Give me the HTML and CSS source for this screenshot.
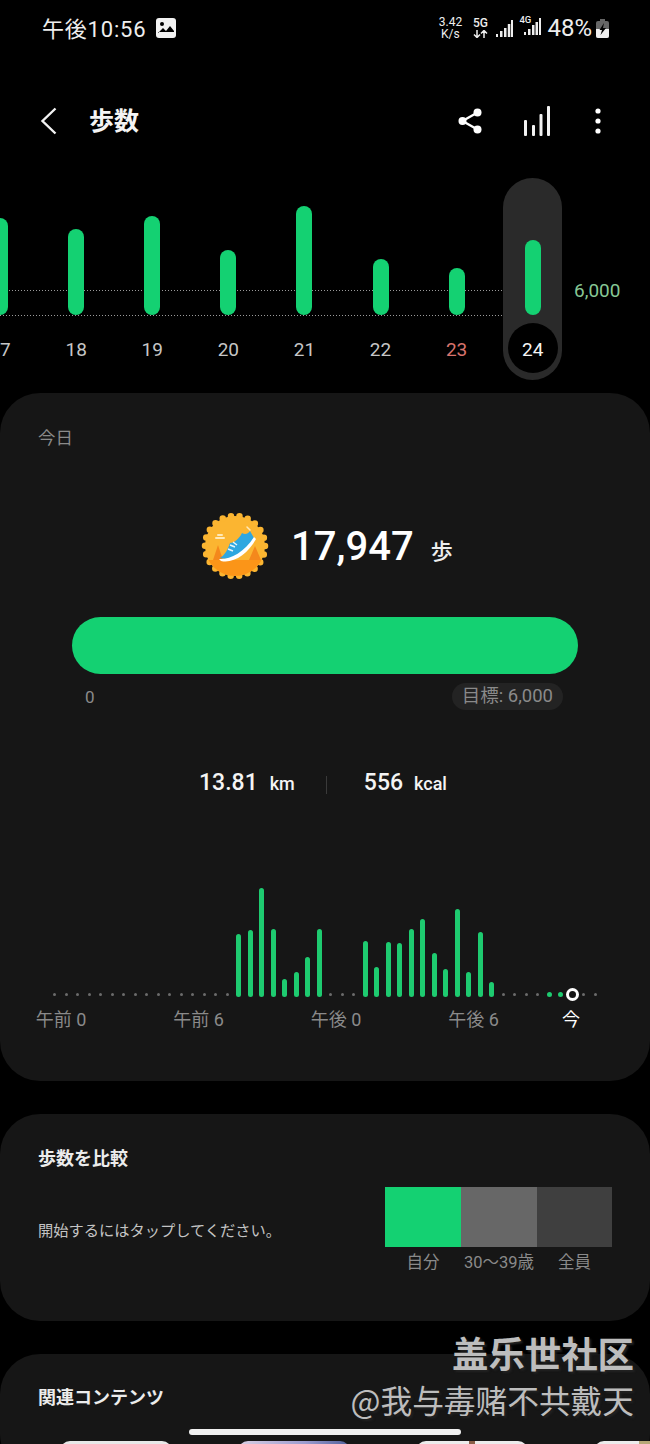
FILE: index.html
```html
<!DOCTYPE html>
<html lang="ja">
<head>
    <meta charset="UTF-8">
    <meta name="viewport" content="width=device-width, initial-scale=1.0">
    <title>歩数</title>
    <link rel="stylesheet" href="styles.css">
</head>
<body>
    <div class="status-bar">
        <div class="status-left">
            <span class="clock">午後10:56</span>
            <svg class="gallery-icon" width="20" height="20" viewBox="0 0 20 20">
                <rect width="20" height="20" rx="3" fill="#f2f2f2"/>
                <circle cx="6" cy="6" r="2" fill="#000"/>
                <path d="M2 15l5-5 3 3 4-5 4 5v1H2z" fill="#000"/>
            </svg>
        </div>
        <div class="status-right">
            <div class="net-speed"><span>3.42</span><span>K/s</span></div>
            <span class="net-type">
                <span>5G</span>
                <svg width="15" height="8" viewBox="0 0 15 8"><path d="M4 0v7M1 4.5L4 7.5 7 4.5M11 8V1M8 3.5L11 .5 14 3.5" fill="none" stroke="#eee" stroke-width="1.5"/></svg>
            </span>
            <svg class="signal" width="17" height="17" viewBox="0 0 17 17" fill="#eee">
                <rect x="0" y="14" width="2" height="3"/><rect x="4" y="11" width="2.5" height="6"/><rect x="8" y="8" width="2.5" height="9"/><rect x="11.8" y="4" width="2.5" height="13"/><rect x="15" y="0" width="2" height="17"/>
            </svg>
            <div class="signal-4g">
                <span>4G</span>
                <svg width="22" height="17" viewBox="0 0 22 17" fill="#eee">
                    <rect x="5" y="14" width="2" height="3"/><rect x="9" y="11" width="2.5" height="6"/><rect x="13" y="7" width="2.5" height="10"/><rect x="16.5" y="4" width="2.5" height="13"/><rect x="20" y="0" width="2" height="17"/>
                </svg>
            </div>
            <span class="battery-text">48%</span>
            <svg width="13" height="19" viewBox="0 0 13 19">
                <rect x="4" y="0" width="5" height="2" fill="#666"/>
                <rect x="0" y="2" width="13" height="17" rx="2" fill="#666"/>
                <path d="M0 10h13v7a2 2 0 0 1-2 2H2a2 2 0 0 1-2-2z" fill="#f0f0f0"/>
                <path d="M8 4L3.5 11H6L4.5 16 10 9H7z" fill="#000"/>
            </svg>
        </div>
    </div>

    <div class="app-bar">
        <svg class="back-icon" width="17" height="28" viewBox="0 0 17 28"><path d="M15.5 1.5L2.5 14l13 12.5" fill="none" stroke="#f2f2f2" stroke-width="2.4"/></svg>
        <h1 class="page-title">歩数</h1>
        <div class="app-actions">
            <svg width="24" height="26" viewBox="0 0 24 26" fill="#fff">
                <circle cx="19.5" cy="4.5" r="4"/><circle cx="4.5" cy="13" r="4"/><circle cx="19.5" cy="21.5" r="4"/>
                <path d="M19.5 4.5L4.5 13l15 8.5" fill="none" stroke="#fff" stroke-width="2.4"/>
            </svg>
            <svg width="26" height="30" viewBox="0 0 26 30" fill="#f2f2f2">
                <rect x="0" y="14" width="3" height="16" rx="1"/><rect x="8" y="19" width="3" height="11" rx="1"/><rect x="15.5" y="8" width="3" height="22" rx="1"/><rect x="23" y="0" width="3" height="30" rx="1"/>
            </svg>
            <svg class="more-icon" width="6" height="26" viewBox="0 0 6 26" fill="#fff">
                <circle cx="3" cy="3" r="2.6"/><circle cx="3" cy="13" r="2.6"/><circle cx="3" cy="23" r="2.6"/>
            </svg>
        </div>
    </div>

    <div class="week">
        <div class="goal-line goal-line-top"></div>
        <div class="goal-line goal-line-bottom"></div>
        <div class="week-days">
            <div class="day"><div class="day-plot"><div class="day-bar" style="height: 97px"></div></div><div class="day-label">17</div></div>
            <div class="day"><div class="day-plot"><div class="day-bar" style="height: 86px"></div></div><div class="day-label">18</div></div>
            <div class="day"><div class="day-plot"><div class="day-bar" style="height: 99px"></div></div><div class="day-label">19</div></div>
            <div class="day"><div class="day-plot"><div class="day-bar" style="height: 65px"></div></div><div class="day-label">20</div></div>
            <div class="day"><div class="day-plot"><div class="day-bar" style="height: 109px"></div></div><div class="day-label">21</div></div>
            <div class="day"><div class="day-plot"><div class="day-bar" style="height: 56px"></div></div><div class="day-label">22</div></div>
            <div class="day"><div class="day-plot"><div class="day-bar" style="height: 47px"></div></div><div class="day-label day-label-sat">23</div></div>
            <div class="day day-today"><div class="day-plot"><div class="day-bar" style="height: 75px"></div></div><div class="day-label">24</div></div>
        </div>
        <span class="goal-value">6,000</span>
    </div>

    <section class="card card-today">
        <div class="card-caption">今日</div>
        <div class="steps-summary">
            <svg class="badge" width="68" height="68" viewBox="0 0 68 68">
                <defs>
                    <clipPath id="badge-clip"><circle cx="34" cy="34" r="30"/></clipPath>
                </defs>
                <circle cx="34" cy="34" r="30" fill="#fbb531" stroke="#fbb531" stroke-width="6.5" stroke-linecap="round" stroke-dasharray="0 8.568"/>
                <g clip-path="url(#badge-clip)">
                    <rect x="0" y="48" width="68" height="20" fill="#fb9518"/>
                    <path d="M12 48l5-15 5 15zM48 48l6-14 6 14z" fill="#f4881c"/>
                </g>
                <path d="M15 26h8M17 23h4" stroke="#ffe9b8" stroke-width="2" stroke-linecap="round"/>
                <path d="M46 15l3 3" stroke="#ffe9b8" stroke-width="1.5" stroke-linecap="round"/>
                <path d="M19 46C24 43 27 37 29 31 33 31 38 27 41 21 44 23 47 22 49 19L53 26C48 36 38 43 30 46 26 47 22 47 19 46z" fill="#2ea7e0"/>
                <path d="M18 47C28 48 43 41 53 25L55 27C47 42 32 52 20 49z" fill="#fff"/>
                <path d="M27 37l5 2M29 33l5 2M32 30l4 3" stroke="#e6f6fc" stroke-width="1.5"/>
            </svg>
            <span class="steps-value">17,947</span>
            <span class="steps-unit">歩</span>
        </div>
        <div class="steps-progress"></div>
        <div class="goal-row">
            <span class="goal-start">0</span>
            <span class="goal-pill">目標: 6,000</span>
        </div>
        <div class="stats">
            <div class="stat"><b>13.81</b><span>km</span></div>
            <div class="stat-divider"></div>
            <div class="stat stat-kcal"><b>556</b><span>kcal</span></div>
        </div>
        <div class="hours">
            <i class="dot"></i><i class="dot"></i><i class="dot"></i><i class="dot"></i><i class="dot"></i><i class="dot"></i><i class="dot"></i><i class="dot"></i>
            <i class="dot"></i><i class="dot"></i><i class="dot"></i><i class="dot"></i><i class="dot"></i><i class="dot"></i><i class="dot"></i><i class="dot"></i>
            <i class="hour-bar" style="height: 63px"></i>
            <i class="hour-bar" style="height: 67px"></i>
            <i class="hour-bar" style="height: 109px"></i>
            <i class="hour-bar" style="height: 68px"></i>
            <i class="hour-bar" style="height: 18px"></i>
            <i class="hour-bar" style="height: 25px"></i>
            <i class="hour-bar" style="height: 40px"></i>
            <i class="hour-bar" style="height: 68px"></i>
            <i class="dot"></i><i class="dot"></i><i class="dot"></i>
            <i class="hour-bar" style="height: 56px"></i>
            <i class="hour-bar" style="height: 30px"></i>
            <i class="hour-bar" style="height: 55px"></i>
            <i class="hour-bar" style="height: 54px"></i>
            <i class="hour-bar" style="height: 68px"></i>
            <i class="hour-bar" style="height: 78px"></i>
            <i class="hour-bar" style="height: 44px"></i>
            <i class="hour-bar" style="height: 28px"></i>
            <i class="hour-bar" style="height: 88px"></i>
            <i class="hour-bar" style="height: 25px"></i>
            <i class="hour-bar" style="height: 65px"></i>
            <i class="hour-bar" style="height: 15px"></i>
            <i class="dot"></i><i class="dot"></i><i class="dot"></i><i class="dot"></i>
            <i class="dot dot-green"></i><i class="dot dot-green"></i>
            <i class="now-ring"></i>
            <i class="dot"></i><i class="dot"></i>
        </div>
        <div class="hour-labels">
            <span>午前 0</span>
            <span>午前 6</span>
            <span>午後 0</span>
            <span>午後 6</span>
            <span class="hour-now">今</span>
        </div>
    </section>

    <section class="card card-compare">
        <div class="card-title">歩数を比較</div>
        <div class="compare-row">
            <p class="compare-text">開始するにはタップしてください。</p>
            <div class="compare-chart">
                <div class="compare-col">
                    <div class="compare-block compare-me"></div>
                    <span>自分</span>
                </div>
                <div class="compare-col">
                    <div class="compare-block compare-age"></div>
                    <span>30～39歳</span>
                </div>
                <div class="compare-col">
                    <div class="compare-block compare-all"></div>
                    <span>全員</span>
                </div>
            </div>
        </div>
    </section>

    <section class="card card-related">
        <div class="card-title">関連コンテンツ</div>
        <div class="thumbs">
            <div class="thumb thumb-a"></div>
            <div class="thumb thumb-b"></div>
            <div class="thumb thumb-c"></div>
            <div class="thumb thumb-d"></div>
        </div>
    </section>

    <div class="watermark">
        <div class="watermark-name">盖乐世社区</div>
        <div class="watermark-user">@我与毒赌不共戴天</div>
    </div>
    <div class="home-indicator"></div>
</body>
</html>
```
FILE: styles.css
```css
* {
    box-sizing: border-box;
}
html, body {
    margin: 0;
    height: 1444px;
    overflow: hidden;
}
body {
    position: relative;
    background: #000;
    color: #fff;
    font-family: Roboto, "Noto Sans CJK JP", sans-serif;
}

/* status bar */
.status-bar {
    height: 56px;
    display: flex;
    align-items: center;
    justify-content: space-between;
    padding: 0 41px 0 42px;
}
.status-left {
    display: flex;
    align-items: center;
    gap: 10px;
}
.clock {
    margin-top: -3px;
    font-size: 22px;
    letter-spacing: 0.8px;
    color: #eee;
}
.gallery-icon {
    margin-top: -1px;
}
.status-right {
    display: flex;
    align-items: center;
    color: #eee;
}
.net-speed {
    width: 26px;
    display: flex;
    flex-direction: column;
    align-items: center;
    font-size: 12px;
    line-height: 12px;
}
.net-type {
    width: 16px;
    margin-left: 9px;
    display: flex;
    flex-direction: column;
    align-items: center;
    gap: 2px;
    font-size: 12px;
    line-height: 10px;
    font-weight: 500;
}
.signal {
    margin-left: 8px;
}
.signal-4g {
    position: relative;
    margin-left: 6px;
}
.signal-4g span {
    position: absolute;
    left: 0;
    top: -3px;
    font-size: 9.5px;
    line-height: 10px;
    font-weight: 500;
}
.battery-text {
    margin-left: 6px;
    margin-right: 4px;
    font-size: 24px;
    line-height: 26px;
}

/* title */
.app-bar {
    height: 122px;
    display: flex;
    align-items: center;
    padding: 8px 49px 0 40px;
}
.page-title {
    margin: -4px 0 0 32px;
    font-size: 25px;
    font-weight: 700;
    color: #f4f4f4;
}
.app-actions {
    margin-left: auto;
    display: flex;
    align-items: center;
    gap: 42px;
}
.more-icon {
    margin-left: 3px;
}

/* week chart */
.week {
    position: relative;
    height: 202px;
}
.goal-line {
    position: absolute;
    left: 0;
    width: 503px;
    height: 1px;
    background-image: linear-gradient(90deg, #9a9a9a 1px, transparent 1px);
    background-size: 3px 1px;
}
.goal-line-top {
    top: 112px;
}
.goal-line-bottom {
    top: 137px;
}
.week-days {
    position: relative;
    display: flex;
    margin-left: -38px;
    height: 100%;
}
.day {
    position: relative;
    width: 76.1px;
    flex: none;
    display: flex;
    flex-direction: column;
    align-items: center;
}
.day-today::before {
    content: "";
    position: absolute;
    top: 0;
    bottom: 0;
    left: 8.5px;
    width: 59px;
    border-radius: 30px;
    background: #2a2a2a;
}
.day-plot {
    position: relative;
    height: 137px;
    display: flex;
    align-items: flex-end;
}
.day-bar {
    width: 16px;
    border-radius: 8px;
    background: #14d172;
}
.day-label {
    position: relative;
    width: 50px;
    height: 50px;
    margin-top: 8px;
    border-radius: 50%;
    font-size: 19px;
    line-height: 53px;
    text-align: center;
    color: #c6c6c6;
}
.day-label-sat {
    color: #d9736d;
}
.day-today .day-label {
    background: #000;
    color: #f5f5f5;
}
.goal-value {
    position: absolute;
    left: 574px;
    top: 100px;
    font-size: 19px;
    line-height: 26px;
    color: #87c795;
}

/* cards */
.card {
    margin-top: 33px;
    border-radius: 40px;
    background: #161616;
}
.card-today {
    margin-top: 13px;
    height: 688px;
    padding-top: 33px;
}
.card-caption {
    padding-left: 38px;
    font-size: 17.5px;
    line-height: 24px;
    color: #8a8a8a;
}
.steps-summary {
    margin-top: 62px;
    height: 68px;
    display: flex;
    align-items: center;
    padding-left: 201px;
}
.steps-value {
    margin-left: 22px;
    font-size: 40px;
    font-weight: 500;
}
.steps-unit {
    margin: 6px 0 0 17px;
    font-size: 22px;
    font-weight: 500;
    color: #eee;
}
.steps-progress {
    margin: 37px 72px 0;
    height: 57px;
    border-radius: 29px;
    background: #14d172;
}
.goal-row {
    margin-top: 9px;
    height: 27px;
    display: flex;
    align-items: center;
    justify-content: space-between;
    padding: 0 87px 0 85px;
    font-size: 17px;
    color: #8a8a8a;
}
.goal-pill {
    padding: 0 10px;
    border-radius: 14px;
    background: #232323;
    font-size: 18.5px;
    line-height: 26px;
    height: 27px;
}
.stats {
    margin-top: 57px;
    height: 30px;
    display: flex;
    align-items: center;
    justify-content: center;
    padding-right: 4px;
}
.stat {
    display: flex;
    align-items: baseline;
    gap: 12px;
    color: #f4f4f4;
}
.stat-kcal {
    gap: 11px;
}
.stat b {
    font-size: 23px;
    font-weight: 500;
}
.stat span {
    font-size: 18px;
    font-weight: 500;
}
.stat-divider {
    width: 1px;
    height: 18px;
    margin: 6px 37px 0 31px;
    background: #3a3a3a;
}

/* hourly chart */
.hours {
    margin-top: 91px;
    height: 109px;
    display: flex;
    align-items: flex-end;
    justify-content: space-between;
    padding: 0 52px;
}
.hours i {
    display: block;
    flex: none;
}
.hour-bar {
    width: 5px;
    border-radius: 3px;
    background: #1ecb70;
}
.dot {
    width: 3px;
    height: 3px;
    margin: 0 1px 1px;
    border-radius: 50%;
    background: #6b6b6b;
}
.dot-green {
    width: 5px;
    height: 5px;
    margin: 0;
    background: #1ecb70;
}
.now-ring {
    width: 13px;
    height: 13px;
    margin: 0 -4px -4px;
    border: 3px solid #fff;
    border-radius: 50%;
    background: #161616;
}
.hour-labels {
    margin-top: 11px;
    display: grid;
    grid-template-columns: 100px 100px 100px 100px 20px;
    column-gap: 37.5px;
    padding-left: 11px;
    font-size: 18px;
    line-height: 24px;
    text-align: center;
    color: #8a8a8a;
    white-space: nowrap;
}
.hour-now {
    color: #fff;
}

/* compare */
.card-compare {
    height: 207px;
    padding-top: 33px;
}
.card-title {
    padding-left: 38px;
    font-size: 18px;
    font-weight: 700;
    line-height: 24px;
    color: #ececec;
}
.compare-row {
    margin-top: 16px;
    display: flex;
    align-items: center;
    justify-content: space-between;
    padding: 0 38px;
}
.compare-text {
    margin: 0 0 4px;
    font-size: 15.25px;
    color: #c4c4c4;
}
.compare-chart {
    display: flex;
}
.compare-col {
    width: 76px;
    text-align: center;
    font-size: 16.5px;
    line-height: 24px;
    color: #8a8a8a;
    white-space: nowrap;
}
.compare-col:last-child {
    width: 75px;
}
.compare-block {
    height: 60px;
    margin-bottom: 4px;
}
.compare-me {
    background: #14d172;
}
.compare-age {
    background: #676767;
}
.compare-all {
    background: #3f3f3f;
}

/* related */
.card-related {
    height: 120px;
    padding-top: 32px;
}
.thumbs {
    margin-top: 31px;
    display: flex;
    gap: 66px;
    padding-left: 60px;
}
.thumb {
    flex: none;
    width: 112px;
    height: 20px;
    border-radius: 10px 10px 0 0;
}
.thumb-a {
    background: #e8e8e8;
}
.thumb-b {
    background: linear-gradient(90deg, #d9cfe4, #9c9ccf 60%, #4f5f9a);
}
.thumb-c {
    background: linear-gradient(90deg, #ececec 47%, #8a5f48 47%, #8a5f48 53%, #ececec 53%);
}
.thumb-d {
    background: linear-gradient(90deg, #ececec 40%, #b8a878 40%);
}

/* overlays */
.watermark {
    position: absolute;
    right: 16px;
    top: 1328px;
    text-align: right;
    font-family: "Noto Sans CJK SC", sans-serif;
    color: #bdbdbd;
    text-shadow: 2px 2px 2px #222;
}
.watermark-name {
    font-size: 36.4px;
    font-weight: 700;
    line-height: 48px;
}
.watermark-user {
    font-size: 31.7px;
    line-height: 46px;
}
.home-indicator {
    position: absolute;
    left: 189px;
    top: 1429px;
    width: 272px;
    height: 6px;
    border-radius: 3px;
    background: #f0f0f0;
}
```
